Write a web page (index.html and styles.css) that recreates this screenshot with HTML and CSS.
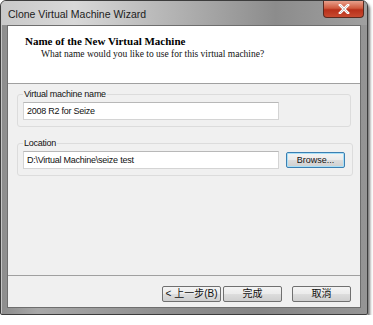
FILE: index.html
```html
<!DOCTYPE html>
<html lang="en">
<head>
    <meta charset="UTF-8">
    <title>Clone Virtual Machine Wizard</title>
    <link rel="stylesheet" href="styles.css">
</head>
<body>
    <div class="window">
        <div class="titlebar">
            <span class="title">Clone Virtual Machine Wizard</span>
            <span class="close-btn">
                <svg width="12" height="10" viewBox="0 0 12 10"><path d="M2 1 L10 9 M10 1 L2 9" stroke="#fff" stroke-width="2.6" stroke-linecap="square"/><path d="M2 1 L10 9 M10 1 L2 9" stroke="#555" stroke-width="0.6" fill="none" opacity="0.5"/></svg>
            </span>
        </div>
        <div class="client">
            <div class="header">
                <h1>Name of the New Virtual Machine</h1>
                <p>What name would you like to use for this virtual machine?</p>
            </div>
            <div class="content">
                <fieldset class="group">
                    <legend>Virtual machine name</legend>
                    <div class="field">2008 R2 for Seize</div>
                </fieldset>
                <fieldset class="group">
                    <legend>Location</legend>
                    <div class="row">
                        <div class="field">D:\Virtual Machine\seize test</div>
                        <button class="btn browse">Browse...</button>
                    </div>
                </fieldset>
            </div>
            <div class="footer">
                <button class="btn cjk">&lt; 上一步(B)</button>
                <button class="btn cjk">完成</button>
                <button class="btn cjk cancel">取消</button>
            </div>
        </div>
    </div>
</body>
</html>
```

FILE: styles.css
```css
* { margin: 0; padding: 0; box-sizing: border-box; }
body {
    background: #fff;
    font-family: "Liberation Sans", "Noto Sans CJK TC", sans-serif;
    font-size: 9px;
    letter-spacing: -0.25px;
    color: #1a1a1a;
}
.window {
    width: 368px;
    height: 315px;
    display: flex;
    flex-direction: column;
    padding: 0 6px 6px 6px;
    border: 1px solid #3c3c3c;
    border-radius: 6px 6px 2px 2px;
    background: linear-gradient(90deg, #8c8c8c 0%, #a8a8a8 10%, #8e8e8e 45%, #858585 70%, #959595 100%);
    box-shadow: 2px 3px 3px rgba(0, 0, 0, 0.55), inset 1px 1px 0 rgba(255, 255, 255, 0.5);
}
.titlebar {
    height: 24px;
    display: flex;
    align-items: flex-start;
    justify-content: space-between;
    background: linear-gradient(90deg, #c9c9c9 0%, #d8d8d8 20%, #a8a8a8 55%, #8c8c8c 75%, #a0a0a0 100%);
    margin: 0 -6px;
    padding: 0 3px 0 7px;
    border-radius: 5px 5px 0 0;
}
.title {
    font-size: 10.5px;
    letter-spacing: 0;
    color: #1c1c1c;
    margin-top: 7px;
}
.close-btn {
    width: 41px;
    height: 17px;
    display: flex;
    align-items: center;
    justify-content: center;
    background: linear-gradient(180deg, #e8a08c 0%, #d05a3e 45%, #b8301a 55%, #c84a30 100%);
    border: 1px solid #5a2a20;
    border-top: none;
    border-radius: 0 0 4px 4px;
}
.client {
    flex: 1;
    display: flex;
    flex-direction: column;
    background: #f0f0f0;
    border: 1px solid #6e6e6e;
}
.header {
    height: 58px;
    background: #fff;
    border-bottom: 1px solid #a0a0a0;
    padding: 8px 0 0 17px;
    font-family: "Liberation Serif", serif;
    letter-spacing: 0;
}
.header h1 {
    font-size: 11px;
    line-height: 14px;
    font-weight: bold;
    color: #000;
}
.header p {
    font-size: 9.5px;
    line-height: 12px;
    padding-left: 16px;
    color: #111;
}
.content {
    flex: 1;
    padding: 3px 9px 0 9px;
    display: flex;
    flex-direction: column;
    gap: 9px;
}
.group {
    border: 1px solid #dcdcdc;
    border-radius: 3px;
    padding: 1px 7px 6px 5px;
}
.group legend {
    padding: 0 1px;
    color: #111;
    line-height: 14px;
}
.field {
    width: 256px;
    height: 18px;
    background: #fff;
    border: 1px solid #d4d4d4;
    border-top-color: #b8b8b8;
    padding: 0 3px;
    line-height: 16px;
    color: #111;
}
.row {
    display: flex;
    align-items: center;
    gap: 7px;
}
.btn {
    width: 59px;
    height: 16px;
    font-family: "Liberation Sans", "Noto Sans CJK TC", sans-serif;
    font-size: 9px;
    letter-spacing: 0;
    line-height: 14px;
    color: #111;
    border: 1px solid #707070;
    border-radius: 2px;
    background: linear-gradient(180deg, #f4f4f4 0%, #ebebeb 50%, #dddddd 51%, #cfcfcf 100%);
}
.cjk {
    font-size: 10px;
}
.browse {
    border-color: #3c7fb1;
    box-shadow: inset 0 0 0 1px #a8e0f8;
}
.footer {
    height: 32px;
    border-top: 1px solid #a0a0a0;
    display: flex;
    justify-content: flex-end;
    align-items: flex-start;
    padding: 10px 9px 0 0;
    gap: 2px;
}
.cancel {
    margin-left: 8px;
}
```
